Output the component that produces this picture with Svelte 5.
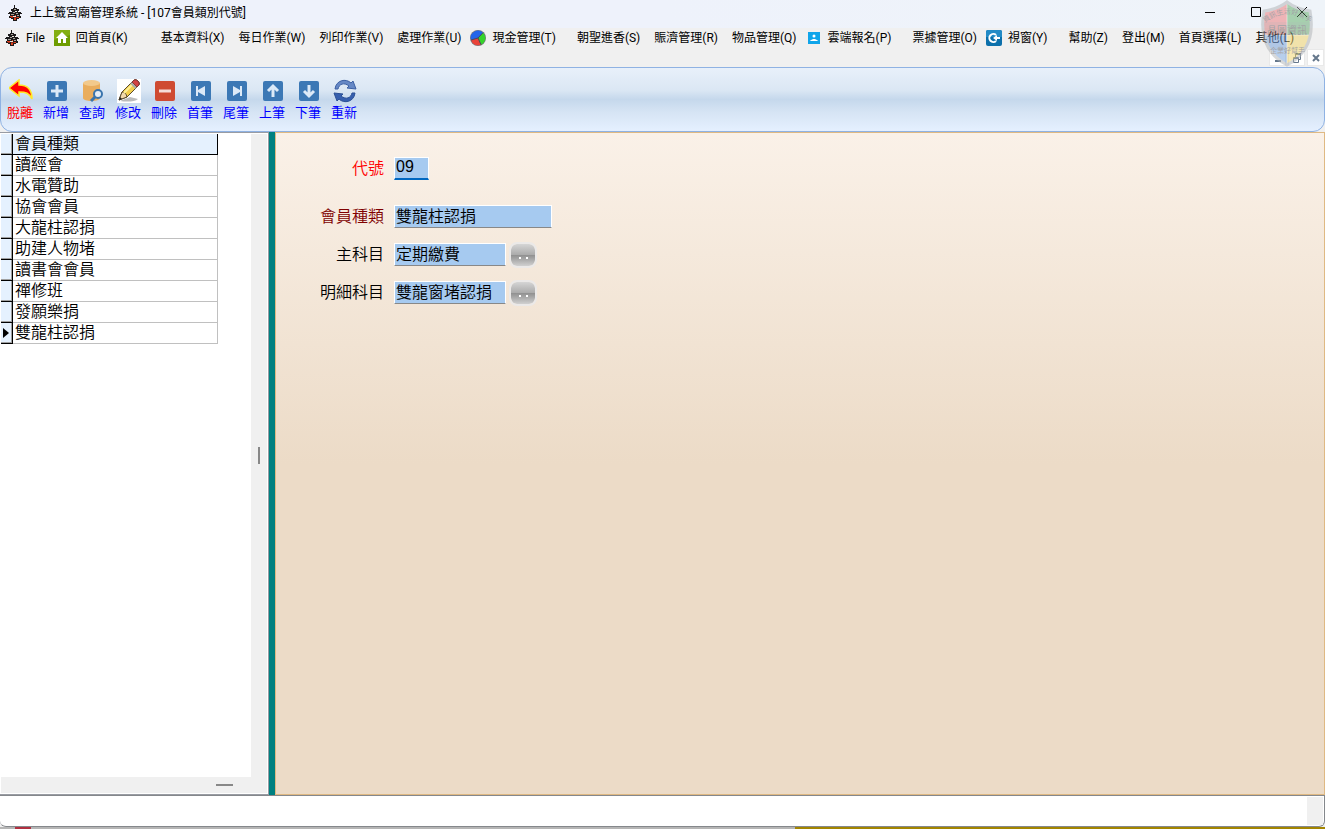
<script lang="ts">
  type MenuItem = { label: string; icon?: string; wide?: boolean };

  const menu: MenuItem[] = [
    { label: 'File' },
    { label: '回首頁(K)', icon: 'home' },
    { label: '基本資料(X)', wide: true },
    { label: '每日作業(W)' },
    { label: '列印作業(V)' },
    { label: '處理作業(U)' },
    { label: '現金管理(T)', icon: 'pie' },
    { label: '朝聖進香(S)' },
    { label: '賑濟管理(R)' },
    { label: '物品管理(Q)' },
    { label: '雲端報名(P)', icon: 'cloud' },
    { label: '票據管理(O)' },
    { label: '視窗(Y)', icon: 'window' },
    { label: '幫助(Z)' },
    { label: '登出(M)' },
    { label: '首頁選擇(L)' },
    { label: '其他(L)' },
  ];

  const tools = [
    { label: '脫離', icon: 'exit' },
    { label: '新增', icon: 'add' },
    { label: '查詢', icon: 'query' },
    { label: '修改', icon: 'edit' },
    { label: '刪除', icon: 'delete' },
    { label: '首筆', icon: 'first' },
    { label: '尾筆', icon: 'last' },
    { label: '上筆', icon: 'up' },
    { label: '下筆', icon: 'down' },
    { label: '重新', icon: 'refresh' },
  ];

  const rows = ['讀經會', '水電贊助', '協會會員', '大龍柱認捐', '助建人物堵', '讀書會會員', '禪修班', '發願樂捐', '雙龍柱認捐'];

  let selected = $state(8);
  let code = $state('09');
  let kind = $state('雙龍柱認捐');
  let subject = $state('定期繳費');
  let detail = $state('雙龍窗堵認捐');

  function pick(index: number) {
    selected = index;
    kind = rows[index];
  }
</script>

{#snippet temple()}
  <svg class="icon16" viewBox="0 0 16 16" aria-hidden="true">
    <path d="M7 0h1v3h2v1h2v2h-1v1h3v1h1v1h-2v2h1v2h-2v1h-2v2H6v-2H4v-1H2v-2h1V9H1V8h1V7h3V6H4V4h2V3h1z" fill="#1c1a1a" />
    <path d="M7 4h2v1H7zM6 7h2v1H6zM4 9h3v1H4zM9 8h2v1H9zM10 10h2v1h-2z" fill="#a9a39c" />
    <path d="M3 11h3v1H3zM10 12h2v1h-2zM7 13h2v2H7zM8 10h1v1H8z" fill="#e0421e" />
    <path d="M6 11h3v1H6zM8 6h2v1H8z" fill="#eee8df" />
    <path d="M7 12h3v1H7zM4 12h2v1H4z" fill="#8c2618" />
  </svg>
{/snippet}

{#snippet menuIcon(name: string)}
  <svg class="icon16" viewBox="0 0 16 16" aria-hidden="true">
    {#if name === 'home'}
      <path d="M0 0h16v16H0z" fill="#6e9c00" />
      <path d="M0 0h16v5L0 10z" fill="#83ae12" />
      <path d="M8 2l6 6h-2v5H9V9H7v4H4V8H2z" fill="#fff" />
    {:else if name === 'pie'}
      <circle cx="8" cy="8" r="8" fill="#77777f" />
      <path d="M8 8L1 10A7.300 7.300 0 0 1 13 2.700z" fill="#2365ea" />
      <path d="M8 8l5-5.300a7.300 7.300 0 0 1-2 12z" fill="#35d32b" />
      <path d="M8 8l3 6.700A7.300 7.300 0 0 1 1 10z" fill="#ea4338" />
      <path d="M1 10l7-2 5-5.300M8 8l3 6.700" fill="none" stroke="#444a60" />
    {:else if name === 'cloud'}
      <path d="M2 2h12v12H2z" fill="#10a5ea" />
      <circle cx="8" cy="6" r="1.500" fill="#fff" />
      <path d="M4 11c0-1 2-1 3-2h2c1 1 3 1 3 2z" fill="#fff" />
    {:else}
      <rect width="16" height="16" rx="2" fill="#0c70ab" />
      <path d="M0 2q0-2 2-2h12q2 0 2 2v5H0z" fill="#238bc6" />
      <path d="M10 5A4 4 0 1 0 10 11" fill="none" stroke="#fff" stroke-width="2" />
      <path d="M7 8l4-3v2h3v2h-3v2z" fill="#fff" />
    {/if}
  </svg>
{/snippet}

{#snippet toolIcon(name: string)}
  <svg class="icon24" viewBox="0 0 24 24" aria-hidden="true">
    {#if name === 'exit'}
      <path d="M0 9L10 1v5c8 0 13 4 13 14-3-6-6-7-13-7v4z" fill="#f00" stroke="#ffe928" stroke-width="1.500" />
    {:else if name === 'query'}
      <path d="M2 4v15c0 4 17 4 17 0V4z" fill="#e9ad5d" />
      <ellipse cx="10.500" cy="4" rx="8.500" ry="3" fill="#f2c98b" />
      <circle cx="17" cy="15" r="4" fill="#e4edf6" stroke="#3974ad" stroke-width="2" />
      <path d="M14 18l-4 4" stroke="#3974ad" stroke-width="3" />
    {:else if name === 'edit'}
      <path d="M0 0h24v24H0z" fill="#fff" />
      <path d="M3 22c6 1 15 1 18-2l-8-2z" fill="#bbb" />
      <path d="M2 21l3-8L17 1q2-1 4 1t1 4L10 18z" fill="#f3cf4d" stroke="#5b4a2c" />
      <path d="M5 13q4 0 5 5l-8 3z" fill="#f2d9ac" stroke="#5b4a2c" />
      <path d="M7 14L18 3" stroke="#ffef95" stroke-width="2" />
      <path d="M17 1q2-1 4 1t1 4l-2 2-5-5z" fill="#d34343" stroke="#7b3535" />
      <path d="M14 4l5 5" stroke="#aaa" stroke-width="2" />
      <path d="M2 21l1-3 2 2z" fill="#222" />
    {:else if name === 'refresh'}
      <path d="M2 10C3 1 13-1 18 4l2-2 3 8-9-1 2-2C11 3 6 5 5 10z" fill="#6688c5" stroke="#3c60a4" />
      <path d="M22 14c-1 9-11 11-16 6l-2 2-3-8 9 1-2 2c5 4 10 2 11-3z" fill="#365fae" stroke="#2b5096" />
    {:else}
      <rect x="2" y="2" width="20" height="20" rx="2" fill={name === 'delete' ? '#cf4b32' : '#3c78b5'} />
      {#if name === 'add'}
        <path d="M12 6v12M6 12h12" stroke="#dce9f7" stroke-width="3" />
      {:else if name === 'delete'}
        <path d="M6 12h12" stroke="#f5ddd9" stroke-width="3" />
      {:else if name === 'first'}
        <path d="M7 7h2v4l7-4v10l-7-4v4H7z" fill="#dce9f7" />
      {:else if name === 'last'}
        <path d="M17 7h-2v4L8 7v10l7-4v4h2z" fill="#dce9f7" />
      {:else if name === 'up'}
        <path d="M12 18V8M7 12l5-5 5 5" fill="none" stroke="#dce9f7" stroke-width="3" />
      {:else}
        <path d="M12 6v10M7 12l5 5 5-5" fill="none" stroke="#dce9f7" stroke-width="3" />
      {/if}
    {/if}
  </svg>
{/snippet}

<div class="app">
  <header class="titlebar">
    {@render temple()}
    <span class="title">上上籤宮廟管理系統 - [107會員類別代號]</span>
    <div class="window-buttons">
      <button type="button" aria-label="最小化"><svg viewBox="0 0 12 12"><path d="M1 6.500h10" /></svg></button>
      <button type="button" aria-label="最大化"><svg viewBox="0 0 12 12"><path d="M1.500 1.500h9v9h-9z" /></svg></button>
      <button type="button" aria-label="關閉"><svg viewBox="0 0 12 12"><path d="M1 1l10 10M11 1L1 11" /></svg></button>
    </div>
  </header>

  <div class="menu-area">
    <nav class="menu">
      {@render temple()}
      {#each menu as item}
        <button type="button" class:with-icon={item.icon} class:wide={item.wide}>
          {#if item.icon}{@render menuIcon(item.icon)}{/if}{item.label}
        </button>
      {/each}
    </nav>
    <div class="child-buttons">
      <button type="button" aria-label="最小化子視窗"><svg viewBox="0 0 12 12"><path d="M3 9h6" /></svg></button>
      <button type="button" aria-label="還原子視窗"><svg viewBox="0 0 12 12"><path class="thin" d="M2.500 5.500h5v5h-5zM4.500 5V1.500h5v6H8M2 6.500h6M4 2.500h6" /></svg></button>
      <button type="button" aria-label="關閉子視窗"><svg viewBox="0 0 12 12"><path d="M3 3l6 6M9 3L3 9" /></svg></button>
    </div>
  </div>

  <svg class="shield" viewBox="0 0 54 68" aria-hidden="true">
    <clipPath id="shield-shape"><path d="M27 3Q36 10 49 12Q56 48 27 64Q-2 48 5 12Q18 10 27 3z" /></clipPath>
    <g clip-path="url(#shield-shape)">
      <path d="M0 0h27v35H0z" fill="#ec7777" />
      <path d="M27 0h27v35H27z" fill="#61ae67" />
      <path d="M0 35h27v33H0z" fill="#739fdb" />
      <path d="M27 35h27v33H27z" fill="#f2d568" />
      <path d="M0 22h54v13H0z" fill="#777" opacity="0.200" />
      <path d="M27 0v68M0 35h54" stroke="#fff" opacity="0.500" />
    </g>
    <path d="M27 2Q36 9 50 11Q57 49 27 65Q-3 49 4 11Q18 9 27 2z" fill="none" stroke="#aeb2b5" stroke-width="3" />
    <path id="shield-arc" d="M5 23Q27 5 50 23" fill="none" />
    <text class="small"><textPath href="#shield-arc">資訊生活好幫手</textPath></text>
    <text x="7" y="34">晶圓資訊</text>
    <text class="small" x="10" y="53">企業好幫手</text>
  </svg>

  <div class="toolbar" role="toolbar" aria-label="資料操作">
    {#each tools as tool}
      <button type="button" class:exit={tool.icon === 'exit'}>
        {@render toolIcon(tool.icon)}
        <span>{tool.label}</span>
      </button>
    {/each}
  </div>

  <main>
    <section class="list">
      <div class="list-body">
        <table>
          <thead><tr><th class="mark"></th><th>會員種類</th></tr></thead>
          <tbody>
            {#each rows as row, i}
              <tr onclick={() => pick(i)}>
                <td class="mark">{#if i === selected}<i></i>{/if}</td>
                <td>{row}</td>
              </tr>
            {/each}
          </tbody>
        </table>
      </div>
      <div class="scroll-y"><i></i></div>
      <div class="scroll-x"><i></i></div>
    </section>
    <div class="splitter"></div>
    <form class="detail" onsubmit={(event) => event.preventDefault()}>
      <div class="field key">
        <label for="code">代號</label>
        <input id="code" class="short" bind:value={code}>
      </div>
      <div class="field required">
        <label for="kind">會員種類</label>
        <input id="kind" class="long" bind:value={kind}>
      </div>
      <div class="field">
        <label for="subject">主科目</label>
        <input id="subject" bind:value={subject}>
        <button type="button" aria-label="選擇主科目"><i></i><i></i></button>
      </div>
      <div class="field">
        <label for="detail">明細科目</label>
        <input id="detail" bind:value={detail}>
        <button type="button" aria-label="選擇明細科目"><i></i><i></i></button>
      </div>
    </form>
  </main>

  <footer><span></span></footer>
  <div class="desktop"></div>
</div>

<style>
  :global(body) { margin: 0; }
  .app { position: relative; display: flex; flex-direction: column; height: 100vh; overflow: hidden; background: #f0f0f0; color: #000; font: 12px/20px Roboto, "Noto Sans CJK TC", sans-serif; }
  button { margin: 0; padding: 0; border: 0; background: none; color: inherit; font: inherit; }
  svg { display: block; flex: none; }
  .icon16 { width: 16px; height: 16px; }
  .icon24 { width: 24px; height: 24px; }

  .titlebar { display: flex; align-items: center; height: 28px; padding-left: 7px; background: linear-gradient(90deg, #eef2fb 50%, #eff4f9); }
  .titlebar .title { flex: 1; margin-left: 7px; padding-bottom: 2px; }
  .titlebar .icon16 { margin-bottom: 2px; }
  .window-buttons { display: flex; height: 24px; margin-bottom: 4px; }
  .window-buttons button { display: grid; place-items: center; width: 46px; }
  .window-buttons svg { width: 12px; height: 12px; fill: none; stroke: #000; }

  .menu-area { height: 39px; }
  .menu { display: flex; align-items: center; height: 20px; padding-left: 4px; white-space: nowrap; }
  .menu button { display: flex; align-items: center; gap: 6px; height: 20px; margin-left: 14px; }
  .menu .icon16 + button { margin-left: 6px; }
  .menu .with-icon { margin-left: 9px; }
  .menu .with-icon + button { margin-left: 21px; }
  .menu .with-icon + .wide { margin-left: 33px; }
  .child-buttons { display: flex; justify-content: flex-end; gap: 2px; padding: 1px 1px 0 0; }
  .child-buttons button { display: grid; place-items: center; width: 17px; height: 17px; border: 1px solid #e9e9e9; background: #fff; box-sizing: border-box; }
  .child-buttons svg { width: 12px; height: 12px; fill: none; stroke: #65778b; stroke-width: 2; }
  .child-buttons .thin { stroke-width: 1; }

  .shield { position: absolute; top: 0; right: 11px; width: 54px; height: 68px; opacity: 0.5; pointer-events: none; }
  .shield text { fill: #555; font: 10px "Noto Sans CJK TC", sans-serif; }
  .shield .small { font-size: 7px; }

  .toolbar { display: flex; align-items: flex-start; box-sizing: border-box; height: 65px; padding: 11px 1px 0; border: 1px solid #8fb2e3; border-radius: 12px; background: linear-gradient(#e8f0fa, #dbe7f4 35%, #c5d8ec 50%, #d6e4f4 70%, #e5f0ff); }
  .toolbar button { display: flex; flex-direction: column; align-items: center; width: 36px; color: #00f; font-size: 13px; line-height: 20px; }
  .toolbar svg { margin-left: 2px; }
  .toolbar .exit { color: #f00; }

  main { display: flex; flex: 1; min-height: 0; font: 350 16px/20px "Liberation Sans", "Noto Sans CJK TC", sans-serif; }
  .list { display: grid; grid-template: minmax(0, 1fr) 16px / 250px 16px; padding: 1px; border: solid #999ca3; border-width: 1px 1px 1px 0; background: #fff; }
  table { width: 217px; border-collapse: separate; border-spacing: 0; table-layout: fixed; }
  th, td { height: 20px; padding: 0 0 0 2px; border: solid #c0c0c0; border-width: 0 1px 1px 0; font-weight: 350; line-height: 20px; text-align: left; }
  th { border-color: #000; background: #e5f1fe; }
  .mark { width: 9px; border-color: #000; background: #e5f1fe; box-shadow: inset -1px -1px #a0a0a0; }
  .mark i { display: block; width: 0; border: 5px solid transparent; border-right: 0; border-left: 6px solid #000; }
  .scroll-y, .scroll-x { display: flex; align-items: center; background: #f0f0f0; }
  .scroll-y { justify-content: center; }
  .scroll-y i { width: 2px; height: 17px; background: #888; }
  .scroll-x { grid-column: 1 / -1; justify-content: flex-end; padding-right: 34px; }
  .scroll-x i { width: 17px; height: 2px; background: #888; }
  .splitter { width: 6px; background: #008080; }

  .detail { flex: 1; padding: 18px 0 0; border: 1px solid #dfb983; background: linear-gradient(#faf1e8, #ecdbc7 50%); }
  .field { display: flex; align-items: center; height: 38px; }
  .key { height: 34px; margin-bottom: 12px; color: #f00; }
  .required { color: #800000; }
  label { width: 108px; margin-right: 10px; padding-top: 2px; text-align: right; }
  input { box-sizing: border-box; width: 112px; height: 23px; margin: 0; padding: 0 1px 2px; border: 1px solid #fff; border-bottom-color: #888; border-radius: 0; outline: 0; background: #a6caf0; color: #000; font: inherit; }
  .short { width: 35px; border-bottom: 2px solid #0067c0; }
  .long { width: 158px; }
  .field button { display: flex; align-items: center; justify-content: center; gap: 5px; width: 28px; height: 26px; margin: 2px 0 0 3px; padding-top: 6px; border: 2px solid #ebe9e8; border-radius: 8px; box-sizing: border-box; background: linear-gradient(#d5d5d5, #aaa 50%, #929292 52%, #d0d0d0) padding-box; }
  .field button i { width: 2px; height: 2px; background: #fff; }

  footer { display: flex; justify-content: flex-end; height: 28px; padding: 1px; border: solid #85888c; border-width: 1px 1px 1px 0; border-radius: 0 0 6px 6px; background: #fff; }
  footer span { width: 16px; background: #f0f0f0; }
  .desktop { height: 2px; background: linear-gradient(90deg, #b5b5b5 15px, #b03040 15px 31px, #b5b5b5 31px 60%, #a38500 60%); }
</style>
